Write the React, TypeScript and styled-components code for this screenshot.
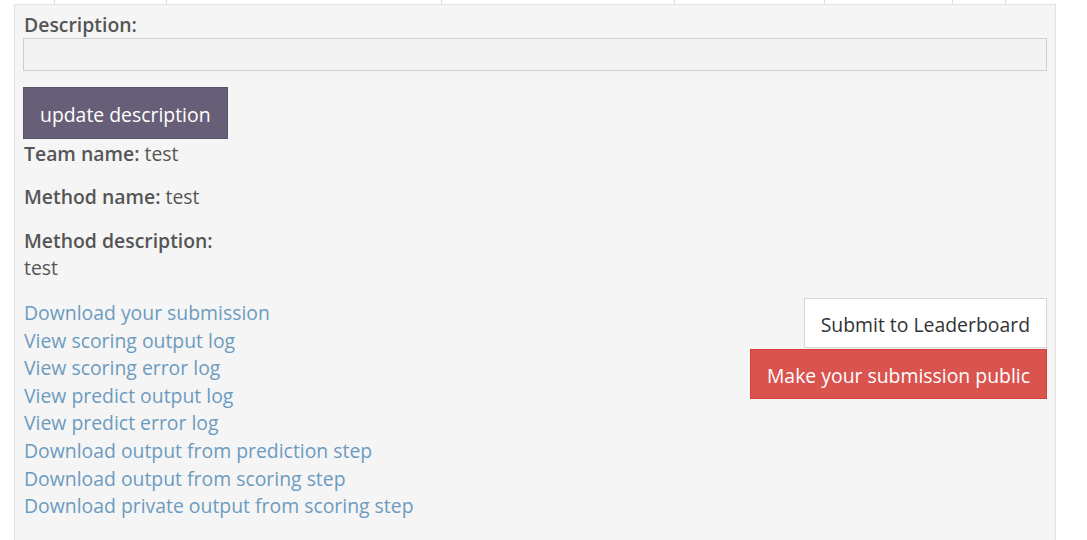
import React from "react";
import styled, { createGlobalStyle } from "styled-components";

const Global = createGlobalStyle`
  html, body { margin: 0; padding: 0; background: #ffffff; }
  body { font-family: "Open Sans", "Noto Sans", sans-serif; }
  * { box-sizing: border-box; }
`;

const Page = styled.div`
  width: 1087px;
  height: 540px;
  overflow: hidden;
  padding: 0 31px 0 14px;
`;

const Ticks = styled.div`
  display: flex;
  height: 4px;
`;

const Tick = styled.div<{ $w: number }>`
  flex: 0 0 ${(p) => p.$w}px;
  border-right: 1px solid #dedede;
  &:last-child { flex: 1; border-right: none; }
`;

const Panel = styled.div`
  background: #f5f5f5;
  border: 1px solid #e3e3e3;
  border-bottom: none;
  padding: 5px 8px 30px 8px;
  min-height: 540px;
  color: #555555;
  font-size: 19.4px;
  line-height: 27.6px;
`;

const Label = styled.label`
  display: block;
  font-weight: 600;
  color: #555555;
  padding: 3px 0 0 1px;
  line-height: 24.6px;
`;

const Input = styled.div`
  height: 33px;
  border: 1px solid #cfcfcf;
  background: #f3f3f3;
`;

const UpdateButton = styled.button`
  margin-top: 16px;
  display: block;
  height: 52px;
  padding: 3px 16px 0;
  background: #675f78;
  border: 1px solid #5a5369;
  color: #ffffff;
  font-family: inherit;
  font-size: 19.4px;
`;

const Info = styled.p<{ $last?: boolean }>`
  margin: 0 0 ${(p) => (p.$last ? 0 : 15)}px;
  padding: 1px 0 0 1px;
`;

const Strong = styled.strong`
  font-weight: 600;
`;

const Bottom = styled.div`
  display: flex;
  justify-content: space-between;
  align-items: flex-start;
  margin-top: 16px;
  padding-left: 1px;
`;

const LinkList = styled.div`
  display: flex;
  flex-direction: column;
  padding-top: 1px;
`;

const Link = styled.a`
  color: #6c9bc0;
  text-decoration: none;
`;

const Actions = styled.div`
  display: flex;
  flex-direction: column;
  align-items: flex-end;
  gap: 1px;
`;

const ActionButton = styled.button<{ $danger?: boolean }>`
  height: 50px;
  padding: 3px 16px 0;
  font-family: inherit;
  font-size: 19.4px;
  background: ${(p) => (p.$danger ? "#d9534f" : "#ffffff")};
  color: ${(p) => (p.$danger ? "#ffffff" : "#333333")};
  border: 1px solid ${(p) => (p.$danger ? "#d43f3a" : "#d6d6d6")};
`;

const links = [
  "Download your submission",
  "View scoring output log",
  "View scoring error log",
  "View predict output log",
  "View predict error log",
  "Download output from prediction step",
  "Download output from scoring step",
  "Download private output from scoring step",
];

const tickWidths = [41, 112, 275, 233, 150, 128, 53, 50];

export default function App() {
  return (
    <>
      <Global />
      <Page>
        <Ticks>
          {tickWidths.map((w, i) => (
            <Tick key={i} $w={w} />
          ))}
        </Ticks>
        <Panel>
          <Label>Description:</Label>
          <Input />
          <UpdateButton>update description</UpdateButton>
          <Info>
            <Strong>Team name:</Strong> test
          </Info>
          <Info>
            <Strong>Method name:</Strong> test
          </Info>
          <Info $last>
            <Strong>Method description:</Strong>
            <br />
            test
          </Info>
          <Bottom>
            <LinkList>
              {links.map((l) => (
                <Link key={l} href="#">
                  {l}
                </Link>
              ))}
            </LinkList>
            <Actions>
              <ActionButton>Submit to Leaderboard</ActionButton>
              <ActionButton $danger>Make your submission public</ActionButton>
            </Actions>
          </Bottom>
        </Panel>
      </Page>
    </>
  );
}
